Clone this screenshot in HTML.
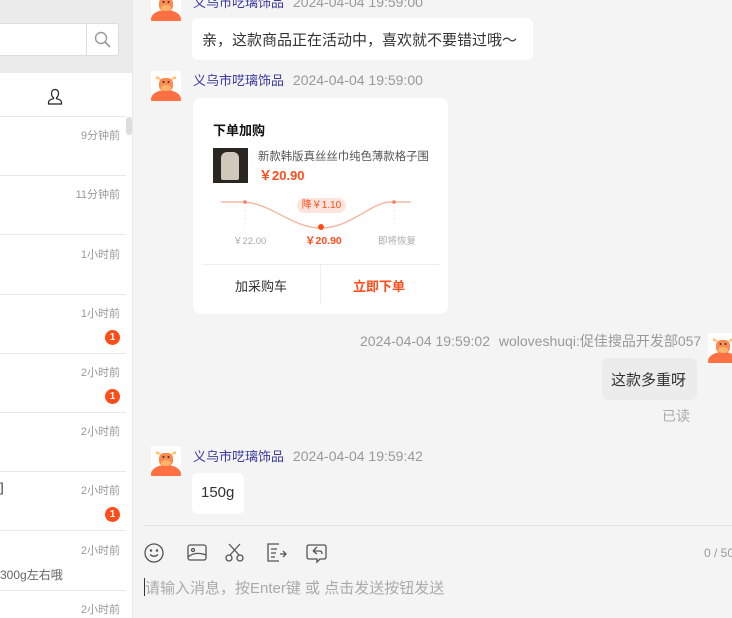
<!DOCTYPE html>
<html><head><meta charset="utf-8"><style>
*{margin:0;padding:0;box-sizing:border-box}
html,body{width:732px;height:618px;overflow:hidden}
body{background:#f4f4f4;font-family:"Liberation Sans","Noto Sans CJK SC",sans-serif;position:relative}
.abs{position:absolute}
.left{left:0;top:0;width:133px;height:618px;background:#fff;border-right:1px solid #e8e8e8}
.top{left:0;top:0;width:132px;height:73px;background:#ebebeb}
.search{left:0;top:23px;width:119px;height:33px;background:#fff;border:1px solid #ddd;border-left:none;border-radius:0 3px 3px 0}
.sbtn{left:86px;top:23px;width:1px;height:33px;background:#ddd}
.item{left:0;width:126px;border-bottom:1px solid #e8e8e8;height:59.3px}
.t{position:absolute;right:6px;top:10px;font-size:11px;color:#999}
.badge{position:absolute;right:6px;top:35px;width:15px;height:15px;border-radius:50%;background:#ff4d1a;color:#fff;font-size:10px;font-weight:bold;text-align:center;line-height:15px}
.name{font-size:13px;color:#3a3aa0}
.time{font-size:14px;color:#999}
.bub{background:#fff;border-radius:6px;font-size:15px;color:#333}
</style></head><body>
<div class="abs left"></div>
<div class="abs top"></div>
<div class="abs search"></div>
<div class="abs sbtn"></div>
<svg class="abs" style="left:94px;top:31px" width="18" height="18" viewBox="0 0 18 18"><circle cx="7" cy="7" r="5.5" fill="none" stroke="#999" stroke-width="1.4"/><path d="M11 11L16 16" stroke="#999" stroke-width="1.6"/></svg>
<svg class="abs" style="left:47px;top:88px" width="16" height="18" viewBox="0 0 16 18"><path d="M8 1.5c2.4 0 3.5 1.7 3.5 4 0 2-1 3.5-2 4.2v1c3 .6 5 1.8 5 3.8v1.5H1.5V14.5c0-2 2-3.2 5-3.8v-1c-1-.7-2-2.2-2-4.2 0-2.3 1.1-4 3.5-4z" fill="none" stroke="#222" stroke-width="1.2"/></svg>
<div class="abs" style="left:0;top:116px;width:126px;height:1px;background:#e8e8e8"></div>
<div class="abs" style="left:126px;top:117px;width:6px;height:18px;background:#ddd;border-radius:3px"></div>
<div class="abs item" style="top:117px"><span class="t">9分钟前</span></div>
<div class="abs item" style="top:176px"><span class="t">11分钟前</span></div>
<div class="abs item" style="top:236px"><span class="t">1小时前</span></div>
<div class="abs item" style="top:295px"><span class="t">1小时前</span><span class="badge">1</span></div>
<div class="abs item" style="top:354px"><span class="t">2小时前</span><span class="badge">1</span></div>
<div class="abs item" style="top:413px"><span class="t">2小时前</span></div>
<div class="abs item" style="top:472px"><span class="t">2小时前</span><span class="badge">1</span><span style="position:absolute;left:0;top:8px;font-size:13px;color:#333">]</span></div>
<div class="abs item" style="top:532px"><span class="t">2小时前</span><span style="position:absolute;left:0;top:34px;font-size:12px;color:#666">300g左右哦</span></div>
<div class="abs item" style="top:591px;height:27px;border-bottom:none"><span class="t">2小时前</span></div>

<svg width="0" height="0" style="position:absolute"><defs><g id="cow"><rect width="30" height="30" fill="#fff"/><ellipse cx="15" cy="28" rx="15" ry="9" fill="#ff7043"/><path d="M5 8 Q4 4 8 6 L10 9Z M25 8 Q26 4 22 6 L20 9Z" fill="#ffc470"/><rect x="8" y="7" width="14" height="13" rx="5" fill="#ff8a50"/><ellipse cx="15" cy="17" rx="5" ry="3" fill="#ffb56a"/><circle cx="12.5" cy="11" r="1" fill="#333"/><circle cx="17.5" cy="11" r="1" fill="#333"/></g></defs></svg>
<svg class="abs" style="left:151px;top:-9px" width="30" height="30"><use href="#cow"/></svg>
<svg class="abs" style="left:151px;top:71px" width="30" height="30"><use href="#cow"/></svg>
<svg class="abs" style="left:708px;top:333px" width="30" height="30"><use href="#cow"/></svg>
<svg class="abs" style="left:151px;top:446px" width="30" height="30"><use href="#cow"/></svg>

<div class="abs" style="left:193px;top:-8px;white-space:nowrap"><span class="name">义乌市呓璃饰品</span>&nbsp;&nbsp;<span class="time">2024-04-04 19:59:00</span></div>
<div class="abs bub" style="left:192px;top:18px;width:341px;height:42px;padding:11px 10px;white-space:nowrap">亲，这款商品正在活动中，喜欢就不要错过哦～</div>

<div class="abs" style="left:193px;top:70px;white-space:nowrap"><span class="name">义乌市呓璃饰品</span>&nbsp;&nbsp;<span class="time">2024-04-04 19:59:00</span></div>
<div class="abs bub" style="left:193px;top:98px;width:255px;height:216px;border-radius:8px">
 <div class="abs" style="left:20px;top:22px;font-size:13px;font-weight:bold;color:#111">下单加购</div>
 <div class="abs" style="left:20px;top:50px;width:35px;height:35px;background:#2a2622"><div style="margin:4px 8px;width:18px;height:28px;background:#cfc8bd;border-radius:6px 6px 2px 2px"></div></div>
 <div class="abs" style="left:65px;top:50px;font-size:11.4px;color:#555;white-space:nowrap">新款韩版真丝丝巾纯色薄款格子围</div>
 <div class="abs" style="left:66px;top:67px;font-size:13px;font-weight:bold;color:#ff4d1a">￥20.90</div>
 <svg class="abs" style="left:28px;top:97px" width="192" height="50" viewBox="0 0 192 50"><path d="M0 7 H20 C50 7 70 33 100 33 C130 33 150 7 170 7 H190" fill="none" stroke="#f4b9a5" stroke-width="1.5"/><line x1="24" y1="7" x2="24" y2="35" stroke="#eee" stroke-dasharray="2 2"/><line x1="173" y1="7" x2="173" y2="35" stroke="#eee" stroke-dasharray="2 2"/><circle cx="24" cy="7" r="1.8" fill="#f08060"/><circle cx="173" cy="7" r="1.8" fill="#f08060"/><circle cx="100" cy="32" r="3" fill="#ff4d1a"/></svg>
 <div class="abs" style="left:104px;top:100px;width:49px;height:15px;border-radius:8px;background:#fde4dc;color:#ff4d1a;font-size:10px;text-align:center;line-height:15px">降￥1.10</div>
 <div class="abs" style="left:40px;top:135px;font-size:9.5px;color:#aaa">￥22.00</div>
 <div class="abs" style="left:112px;top:135px;font-size:10.5px;font-weight:bold;color:#ff4d1a">￥20.90</div>
 <div class="abs" style="left:185px;top:135px;font-size:9.5px;color:#aaa">即将恢复</div>
 <div class="abs" style="left:9px;top:166px;width:237px;height:1px;background:#eee"></div>
 <div class="abs" style="left:127px;top:167px;width:1px;height:38px;background:#eee"></div>
 <div class="abs" style="left:42px;top:178px;font-size:13px;color:#333">加采购车</div>
 <div class="abs" style="left:160px;top:178px;font-size:13px;font-weight:bold;color:#ff4d1a">立即下单</div>
</div>

<div class="abs" style="left:360px;top:331px;white-space:nowrap"><span class="time">2024-04-04 19:59:02</span>&nbsp;&nbsp;<span class="time">woloveshuqi:促佳搜品开发部057</span></div>
<div class="abs bub" style="left:602px;top:358px;width:95px;height:42px;background:#ececec;padding:11px 9px;white-space:nowrap">这款多重呀</div>
<div class="abs" style="left:662px;top:406px;font-size:14px;color:#aaa">已读</div>

<div class="abs" style="left:193px;top:446px;white-space:nowrap"><span class="name">义乌市呓璃饰品</span>&nbsp;&nbsp;<span class="time">2024-04-04 19:59:42</span></div>
<div class="abs bub" style="left:192px;top:473px;width:52px;height:41px;padding:11px 9px">150g</div>

<div class="abs" style="left:144px;top:525px;width:588px;height:1px;background:#e2e2e2"></div>
<svg class="abs" style="left:143px;top:542px" width="200" height="22" viewBox="0 0 200 22" fill="none" stroke="#555" stroke-width="1.3">
<circle cx="11" cy="11" r="9"/><path d="M7 12.5 Q11 16 15 12.5"/><circle cx="8" cy="8.5" r=".6" fill="#555"/><circle cx="14" cy="8.5" r=".6" fill="#555"/>
<rect x="45" y="3" width="18" height="15" rx="2"/><circle cx="50" cy="8" r="1.5"/><path d="M45 15 Q52 9 63 13"/>
<circle cx="86" cy="16" r="3"/><circle cx="97" cy="16" r="3"/><path d="M87 13 L97 2 M96 13 L86 2"/>
<path d="M136 2 H125 V19 H136 M128 7 H134 M128 11 H133 M128 15 H132 M137 12 H143 M140 9 L143 12 L140 15"/>
<path d="M166 3 H181 Q183 3 183 5 V15 Q183 17 181 17 H177 L174 20 V17 H166 Q164 17 164 15 V5 Q164 3 166 3Z M170 9 L174 5 M170 9 L174 12 M170 9 H177 Q179 9 179 12"/>
</svg>
<div class="abs" style="left:704px;top:546px;font-size:12px;color:#999;white-space:nowrap">0 / 50</div>
<div class="abs" style="left:144px;top:578px;width:1px;height:18px;background:#333"></div>
<div class="abs" style="left:145px;top:577px;font-size:15px;color:#aaa;white-space:nowrap">请输入消息，按Enter键 或 点击发送按钮发送</div>
</body></html>
